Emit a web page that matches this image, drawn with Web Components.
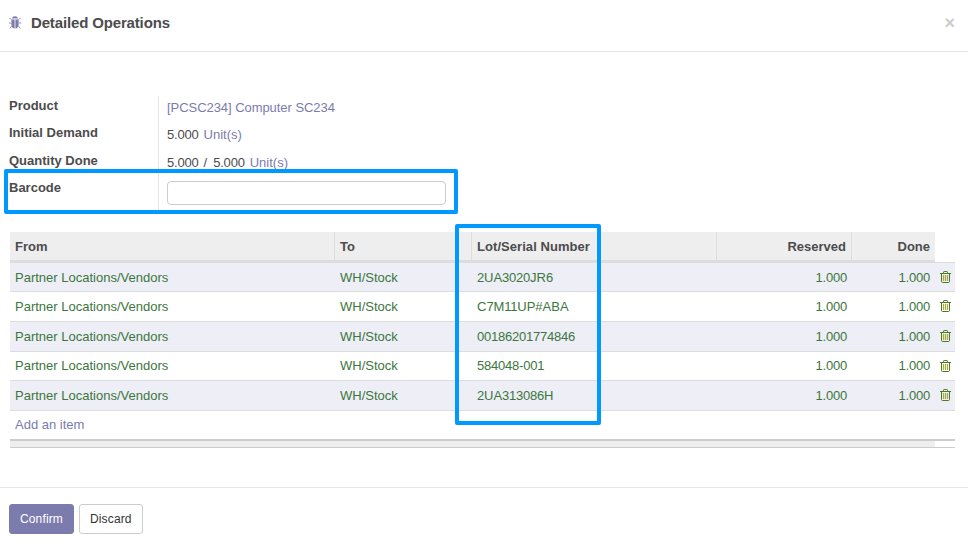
<!DOCTYPE html>
<html>
<head>
<meta charset="utf-8">
<title>Detailed Operations</title>
<style>
  html, body { margin: 0; padding: 0; background: #fff; }
  body { font: 13px/1.42857 "Liberation Sans", Arial, sans-serif; color: #4c4c4c; }
</style>
</head>
<body>
<op-dialog>
  <span slot="title">Detailed Operations</span>

  <op-field label="Product"><a-link style="letter-spacing:-0.05px">[PCSC234] Computer SC234</a-link></op-field>
  <op-field label="Initial Demand"><num-text>5.000</num-text><a-link>Unit(s)</a-link></op-field>
  <op-field label="Quantity Done"><num-text>5.000</num-text><span style="margin-right:1px">/</span><num-text>5.000</num-text><a-link>Unit(s)</a-link></op-field>
  <op-field label="Barcode" tall><op-input></op-input></op-field>

  <op-table>
    <op-row from="Partner Locations/Vendors" to="WH/Stock" lot="2UA3020JR6" odd></op-row>
    <op-row from="Partner Locations/Vendors" to="WH/Stock" lot="C7M11UP#ABA"></op-row>
    <op-row from="Partner Locations/Vendors" to="WH/Stock" lot="00186201774846" odd></op-row>
    <op-row from="Partner Locations/Vendors" to="WH/Stock" lot="584048-001"></op-row>
    <op-row from="Partner Locations/Vendors" to="WH/Stock" lot="2UA313086H" odd></op-row>
  </op-table>

  <op-button slot="footer" primary>Confirm</op-button>
  <op-button slot="footer">Discard</op-button>

  <op-highlight slot="overlay" style="left:4px;top:169px;width:446px;height:37px"></op-highlight>
  <op-highlight slot="overlay" style="left:455px;top:224px;width:138px;height:193px"></op-highlight>
</op-dialog>

<script>
'use strict';

const BUG_ICON = `<svg width="12" height="13" viewBox="0 0 12 13" aria-hidden="true">
  <g fill="#7c7bad">
    <path d="M3.2 2.6C3.2 1 4.6.3 6 .3S8.8 1 8.8 2.6z"/>
    <path d="M2.4 3.4h3.2v9.2C3.6 12.4 2.4 10.8 2.4 8.8zM6.4 3.4h3.2v5.4c0 2-1.2 3.6-3.2 3.8z"/>
  </g>
  <path fill="none" stroke="#8f8ebd" d="M.4 1.8L2.4 3.8M11.6 1.8L9.6 3.8M0 7H2.4M12 7H9.6M.6 12.2L2.8 10M11.4 12.2L9.2 10"/>
</svg>`;

const TRASH_ICON = `<svg width="11" height="12" viewBox="0 0 11 12" aria-hidden="true">
  <g fill="none" stroke="#4a7a20" stroke-width="1">
    <path d="M0 2.5H11M3.5 2.5V1.2C3.5.8 3.8.5 4.2.5H6.8C7.2.5 7.5.8 7.5 1.2V2.5"/>
    <path d="M1.5 2.5V10.5C1.5 11.1 1.9 11.5 2.5 11.5H8.5C9.1 11.5 9.5 11.1 9.5 10.5V2.5"/>
    <path d="M3.5 4V10M5.5 4V10M7.5 4V10" stroke="#a8a83c" stroke-width="1.2"/>
  </g>
</svg>`;

// the reference has hinted digits, 7px wide
const tightDigits = s => s.replace(/\d+/g, m => `<span style="letter-spacing:-0.23px">${m}</span>`);

class ALink extends HTMLElement {
  constructor() {
    super();
    this.attachShadow({ mode: 'open' }).innerHTML = `
      <style>:host { display: inline; color: #7c7bad; }</style><slot></slot>`;
  }
}

class NumText extends HTMLElement {
  constructor() {
    super();
    this.attachShadow({ mode: 'open' }).innerHTML = `
      <style>:host { display: inline; letter-spacing: -0.2px; }</style><slot></slot>`;
  }
}

class OpInput extends HTMLElement {
  constructor() {
    super();
    this.attachShadow({ mode: 'open' }).innerHTML = `
      <style>
        :host { display: block; width: 279px; height: 24px; box-sizing: border-box;
          border: 1px solid #ccc; border-radius: 4px; background: #fff; }
      </style>`;
  }
}

class OpField extends HTMLElement {
  constructor() {
    super();
    this.attachShadow({ mode: 'open' }).innerHTML = `
      <style>
        :host { display: grid; grid-template-columns: 158px 1fr; height: 27.4px; }
        :host([tall]) { height: 33px; }
        .label { padding: 1px 0 0 9px; font-weight: bold; line-height: 18.57px; }
        .value { display: flex; gap: 5px; border-left: 1px solid #e5e5e5; padding: 3px 0 0 8px; line-height: 18.57px; }
      </style>
      <div class="label"></div>
      <div class="value"><slot></slot></div>`;
    this.shadowRoot.querySelector('.label').textContent = this.getAttribute('label');
  }
}

const COLS = '325px 137px 245px 135px 83px 20px';

class OpRow extends HTMLElement {
  constructor() {
    super();
    this.attachShadow({ mode: 'open' }).innerHTML = `
      <style>
        :host { display: grid; grid-template-columns: ${COLS}; box-sizing: border-box;
          height: 29.57px; border-top: 1px solid #ddd; color: #3c763d; background: #fff; }
        :host([odd]) { background: #eeeef6; }
        div { padding: 5.85px 5px 0; line-height: 18.57px; white-space: nowrap; }
        .num { text-align: right; letter-spacing: -0.2px; }
        .del { padding: 4px 0 0 5px; }
        svg { display: block; margin-top: 4px; }
      </style>
      <div class="from"></div><div class="to"></div><div class="lot"></div>
      <div class="num">1.000</div><div class="num">1.000</div>
      <div class="del">${TRASH_ICON}</div>`;
    this.shadowRoot.querySelector('.from').textContent = this.getAttribute('from');
    this.shadowRoot.querySelector('.to').textContent = this.getAttribute('to');
    this.shadowRoot.querySelector('.lot').innerHTML = tightDigits(this.getAttribute('lot'));
  }
}

class OpTable extends HTMLElement {
  constructor() {
    super();
    this.attachShadow({ mode: 'open' }).innerHTML = `
      <style>
        :host { display: block; margin: 0 13px 0 10px; }
        .head { display: grid; grid-template-columns: ${COLS}; height: 29.7px; }
        .head div { background: #eee; font-weight: bold; padding: 6px 5px 0; line-height: 18.57px;
          border-bottom: 2px solid #ddd; border-right: 1px solid #ddd; box-sizing: border-box; }
        .head .num { text-align: right; }
        .head .lot { letter-spacing: 0.06px; }
        .head .last { border-right: 0; }
        .head div.none { background: none; border: 0; }
        .add { border-top: 1px solid #ddd; padding: 5.2px 5px 0; line-height: 18.57px; height: 29.57px;
          box-sizing: border-box; color: #7c7bad; }
        .foot { height: 9px; box-sizing: border-box; border-top: 2px solid #ccc; border-bottom: 1px solid #ccc; }
        .foot div { width: 925px; height: 6px; background: #eee; }
      </style>
      <div class="head">
        <div>From</div><div>To</div><div class="lot">Lot/Serial Number</div>
        <div class="num">Reserved</div><div class="num last">Done</div><div class="none"></div>
      </div>
      <slot></slot>
      <div class="add">Add an item</div>
      <div class="foot"><div></div></div>`;
  }
}

class OpButton extends HTMLElement {
  constructor() {
    super();
    this.attachShadow({ mode: 'open' }).innerHTML = `
      <style>
        :host { display: block; box-sizing: border-box; height: 30px; padding: 5px 10px;
          border: 1px solid #ccc; border-radius: 3px; background: #fff; color: #333;
          font-size: 12px; line-height: 18px; letter-spacing: 0.14px; }
        :host([primary]) { background: #7c7bad; border-color: #7c7bad; color: #fff; }
      </style><slot></slot>`;
  }
}

class OpHighlight extends HTMLElement {
  constructor() {
    super();
    this.attachShadow({ mode: 'open' }).innerHTML = `
      <style>
        :host { display: block; position: absolute; border: 4px solid #0099ff; border-radius: 2px; pointer-events: none; }
      </style>`;
  }
}

class OpDialog extends HTMLElement {
  constructor() {
    super();
    this.attachShadow({ mode: 'open' }).innerHTML = `
      <style>
        :host { display: block; position: relative; width: 968px; height: 542px; overflow: hidden; background: #fff; }
        header { display: flex; align-items: center; height: 52px; box-sizing: border-box;
          border-bottom: 1px solid #e5e5e5; padding: 0 13px 6px 9px; }
        header svg { display: block; margin-right: 10px; }
        h4 { flex: 1; margin: 0; font-size: 15px; font-weight: bold; line-height: 18px; color: #4c4c4c; letter-spacing: -0.15px; }
        .close { color: #ccc; font-size: 18px; font-weight: bold; line-height: 18px; }
        main { display: block; height: 436px; box-sizing: border-box; padding-top: 44px; border-bottom: 1px solid #e5e5e5; }
        .fields { margin-bottom: 21px; }
        footer { display: flex; gap: 5px; padding: 16px 9px 0; }
      </style>
      <header>${BUG_ICON}<h4><slot name="title"></slot></h4><span class="close">×</span></header>
      <main>
        <div class="fields"><slot name="fields"></slot></div>
        <slot></slot>
      </main>
      <footer><slot name="footer"></slot></footer>
      <slot name="overlay"></slot>`;
  }
}

customElements.define('a-link', ALink);
customElements.define('num-text', NumText);
customElements.define('op-input', OpInput);
customElements.define('op-field', OpField);
customElements.define('op-row', OpRow);
customElements.define('op-table', OpTable);
customElements.define('op-button', OpButton);
customElements.define('op-highlight', OpHighlight);
customElements.define('op-dialog', OpDialog);

for (const f of document.querySelectorAll('op-field')) f.slot = 'fields';
</script>
</body>
</html>
